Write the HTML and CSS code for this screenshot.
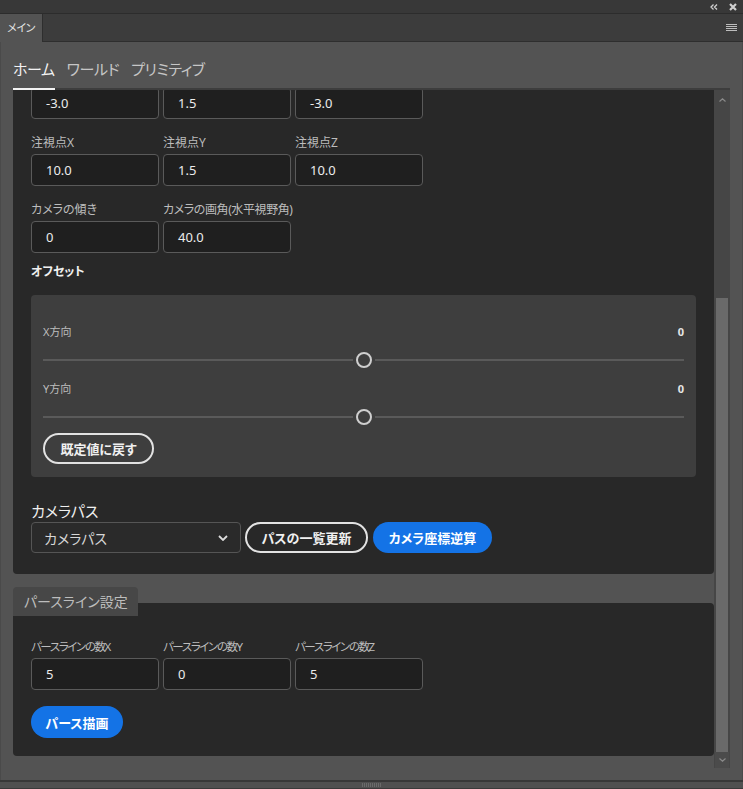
FILE: index.html
```html
<!DOCTYPE html>
<html lang="ja">
<head>
<meta charset="utf-8">
<title>メイン</title>
<link rel="stylesheet" href="styles.css">
</head>
<body>
<div class="app">
  <div class="titlebar">
    <svg class="tb-icon" width="8" height="6" viewBox="0 0 8 6"><path d="M3.5 0.5 L1 3 L3.5 5.5 M7 0.5 L4.5 3 L7 5.5" fill="none" stroke="#d0d0d0" stroke-width="1.3"/></svg>
    <svg class="tb-icon close" width="8" height="8" viewBox="0 0 8 8"><path d="M1 1 L7 7 M7 1 L1 7" fill="none" stroke="#cfcfcf" stroke-width="2.2"/></svg>
  </div>
  <div class="tabbar">
    <div class="doc-tab">メイン</div>
    <div class="tabbar-fill">
      <svg class="menu-icon" width="11" height="8" viewBox="0 0 11 8"><path d="M0 0.5 H11 M0 2.5 H11 M0 4.5 H11 M0 6.5 H11" stroke="#bdbdbd" stroke-width="1"/></svg>
    </div>
  </div>
  <div class="main">
    <nav class="nav">
      <span class="nav-item active">ホーム</span>
      <span class="nav-item">ワールド</span>
      <span class="nav-item">プリミティブ</span>
    </nav>
    <div class="viewport">
      <div class="content">
        <div class="scroller">
          <section class="card card-camera">
            <div class="fields">
              <div class="field"><span class="field-label"></span><span class="input" aria-label="カメラ位置X">-3.0</span></div>
              <div class="field"><span class="field-label"></span><span class="input" aria-label="カメラ位置Y">1.5</span></div>
              <div class="field"><span class="field-label"></span><span class="input" aria-label="カメラ位置Z">-3.0</span></div>
            </div>
            <div class="fields">
              <label class="field"><span class="field-label">注視点X</span><span class="input">10.0</span></label>
              <label class="field"><span class="field-label">注視点Y</span><span class="input">1.5</span></label>
              <label class="field"><span class="field-label">注視点Z</span><span class="input">10.0</span></label>
            </div>
            <div class="fields last">
              <label class="field"><span class="field-label">カメラの傾き</span><span class="input">0</span></label>
              <label class="field"><span class="field-label narrow">カメラの画角(水平視野角)</span><span class="input">40.0</span></label>
            </div>
            <div class="sub-heading">オフセット</div>
            <div class="offset-panel">
              <div class="slider-head"><span>X方向</span><span class="slider-value">0</span></div>
              <div class="slider"><span class="track"></span><span class="thumb"></span><span class="track"></span></div>
              <div class="slider-head second"><span>Y方向</span><span class="slider-value">0</span></div>
              <div class="slider"><span class="track"></span><span class="thumb"></span><span class="track"></span></div>
              <button class="btn btn-outline reset">既定値に戻す</button>
            </div>
            <div class="path-label">カメラパス</div>
            <div class="path-row">
              <div class="select"><span>カメラパス</span>
                <svg width="10" height="6" viewBox="0 0 10 6"><path d="M1 1 L5 5 L9 1" fill="none" stroke="#dcdcdc" stroke-width="1.8"/></svg>
              </div>
              <button class="btn btn-outline">パスの一覧更新</button>
              <button class="btn btn-primary">カメラ座標逆算</button>
            </div>
          </section>
          <div class="section-tab">パースライン設定</div>
          <section class="card card-perse">
            <div class="fields">
              <label class="field"><span class="field-label condensed">パースラインの数X</span><span class="input">5</span></label>
              <label class="field"><span class="field-label condensed">パースラインの数Y</span><span class="input">0</span></label>
              <label class="field"><span class="field-label condensed">パースラインの数Z</span><span class="input">5</span></label>
            </div>
            <button class="btn btn-primary draw">パース描画</button>
          </section>
        </div>
      </div>
      <div class="scrollbar">
        <div class="sb-up"><svg width="7" height="4" viewBox="0 0 7 4"><path d="M0.5 3.5 L3.5 0.8 L6.5 3.5" fill="none" stroke="#8a8a8a" stroke-width="1.2"/></svg></div>
        <div class="sb-space"></div>
        <div class="sb-thumb"></div>
        <div class="sb-down"><svg width="7" height="4" viewBox="0 0 7 4"><path d="M0.5 0.5 L3.5 3.2 L6.5 0.5" fill="none" stroke="#8a8a8a" stroke-width="1.2"/></svg></div>
      </div>
    </div>
  </div>
  <div class="footer"><span class="grip"></span></div>
</div>
</body>
</html>
```

FILE: styles.css
```css
* { box-sizing: border-box; }
html, body { margin: 0; padding: 0; }
body {
  width: 743px;
  height: 789px;
  overflow: hidden;
  background: #535353;
  font-family: "Noto Sans", "Noto Sans CJK JP", sans-serif;
  font-feature-settings: "palt";
  color: #e6e6e6;
}
.app {
  width: 743px;
  height: 789px;
  display: flex;
  flex-direction: column;
}
.titlebar {
  height: 14px;
  background: #383838;
  border-bottom: 1px solid #2c2c2c;
  display: flex;
  justify-content: flex-end;
  align-items: center;
  gap: 11px;
  padding-right: 6px;
}
.tb-icon { display: block; }
.tabbar {
  height: 28px;
  display: flex;
  background: #3c3c3c;
}
.doc-tab {
  width: 42px;
  background: #535353;
  font-size: 11px;
  line-height: 28px;
  text-align: center;
  color: #e4e4e4;
  letter-spacing: -0.5px;
}
.tabbar-fill {
  flex: 1;
  border-bottom: 1px solid #2e2e2e;
  border-left: 1px solid #2e2e2e;
  display: flex;
  justify-content: flex-end;
  align-items: center;
  padding-right: 6px;
}
.menu-icon { display: block; }
.main {
  flex: 1;
  display: flex;
  flex-direction: column;
  border-left: 1px solid #4a4a4a;
  border-right: 1px solid #4a4a4a;
}
.nav {
  height: 48px;
  margin: 0 12px 0 12px;
  display: flex;
  align-items: flex-end;
  gap: 12px;
  border-bottom: 2px solid #3d3d3d;
}
.nav-item {
  font-size: 15px;
  line-height: 24px;
  letter-spacing: -0.4px;
  color: #c6c6c6;
  padding-bottom: 7px;
  margin-bottom: -2px;
  border-bottom: 2px solid transparent;
  white-space: nowrap;
}
.nav-item.active {
  color: #f2f2f2;
  border-bottom-color: #f4f4f4;
}
.viewport {
  height: 678px;
  margin: 0 12px;
  display: flex;
}
.content {
  flex: 1;
  overflow: hidden;
}
.scroller { margin-top: -38px; }
.card {
  background: #282828;
  padding: 16px 18px 21px 18px;
  display: flex;
  flex-direction: column;
  align-items: flex-start;
}
.card-camera { border-radius: 0 0 4px 4px; }
.fields {
  display: grid;
  grid-template-columns: repeat(3, 128px);
  column-gap: 4px;
  margin-bottom: 16px;
}
.fields.last { margin-bottom: 11px; }
.field { display: flex; flex-direction: column; }
.field-label {
  font-size: 12px;
  line-height: 16px;
  height: 16px;
  margin-bottom: 3px;
  color: #bcbcbc;
  white-space: nowrap;
}
.field-label.narrow { letter-spacing: -0.4px; }
.field-label.condensed { letter-spacing: -1.4px; font-size: 11.5px; }
.input {
  height: 32px;
  border: 1px solid #5a5a5a;
  border-radius: 4px;
  background: #1f1f1f;
  font-size: 13px;
  line-height: 30px;
  padding-left: 14px;
  color: #ececec;
}
.sub-heading {
  font-size: 12px;
  line-height: 16px;
  font-weight: bold;
  color: #f0f0f0;
}
.offset-panel {
  margin-top: 15px;
  align-self: stretch;
  background: #3e3e3e;
  border-radius: 4px;
  padding: 29px 12px 13px 12px;
  display: flex;
  flex-direction: column;
  align-items: flex-start;
}
.slider-head {
  align-self: stretch;
  display: flex;
  justify-content: space-between;
  font-size: 11px;
  line-height: 16px;
  color: #bdbdbd;
}
.slider-head.second { margin-top: 7px; }
.slider-value { color: #e6e6e6; font-weight: bold; }
.slider {
  align-self: stretch;
  height: 28px;
  margin-top: 6px;
  display: flex;
  align-items: center;
  gap: 3px;
}
.track {
  flex: 1;
  height: 2px;
  background: #5a5a5a;
}
.thumb {
  width: 16px;
  height: 16px;
  border: 2px solid #cfcfcf;
  border-radius: 50%;
  background: #3e3e3e;
}
.btn {
  height: 31px;
  border-radius: 16px;
  font-family: inherit;
  font-feature-settings: "palt";
  font-size: 13px;
  font-weight: bold;
  padding: 0;
  white-space: nowrap;
  text-align: center;
  cursor: pointer;
}
.btn-outline {
  background: transparent;
  border: 2px solid #e2e2e2;
  color: #f0f0f0;
}
.btn-primary {
  background: #1473e6;
  border: none;
  color: #ffffff;
}
.reset { margin-top: 2px; width: 111px; }
.path-label {
  margin-top: 25px;
  font-size: 15px;
  line-height: 18px;
  color: #f0f0f0;
  margin-bottom: 2px;
}
.path-row {
  display: flex;
  align-items: center;
}
.select {
  width: 210px;
  height: 31px;
  border: 1px solid #555;
  border-radius: 4px;
  background: #2a2a2a;
  display: flex;
  align-items: center;
  justify-content: space-between;
  padding: 0 12px 0 12px;
  font-size: 14px;
  color: #d6d6d6;
}
.select svg { display: block; }
.path-row .btn-outline { margin-left: 4px; width: 123px; }
.path-row .btn-primary { margin-left: 5px; width: 119px; }
.section-tab {
  margin-top: 13px;
  margin-bottom: -13px;
  position: relative;
  z-index: 1;
  width: 125px;
  height: 29px;
  background: #474747;
  border-radius: 4px 4px 0 0;
  padding-left: 11px;
  font-size: 14px;
  line-height: 29px;
  color: #bdbdbd;
  white-space: nowrap;
}
.card-perse {
  border-radius: 4px;
  padding: 36px 18px 18px 18px;
}
.card-perse .fields { margin-bottom: 16px; }
.draw { height: 32px; width: 92px; }
.scrollbar {
  width: 16px;
  background: #464646;
  display: flex;
  flex-direction: column;
  align-items: center;
}
.sb-up {
  height: 24px;
  width: 16px;
  display: flex;
  justify-content: center;
  padding-top: 8px;
}
.sb-up svg, .sb-down svg { display: block; }
.sb-space { flex: 1; }
.sb-thumb {
  width: 12px;
  height: 454px;
  background: #6a6a6a;
}
.sb-down {
  width: 14px;
  height: 16px;
  background: #4b4b4b;
  display: flex;
  justify-content: center;
  padding-top: 6px;
}
.footer {
  height: 9px;
  border-top: 2px solid #383838;
  border-bottom: 1px solid #3a3a3a;
  background: #505050;
  display: flex;
  justify-content: center;
  align-items: center;
}
.grip {
  width: 19px;
  height: 4px;
  background: repeating-linear-gradient(90deg, #6a6a6a 0 1px, transparent 1px 2px);
}
```
